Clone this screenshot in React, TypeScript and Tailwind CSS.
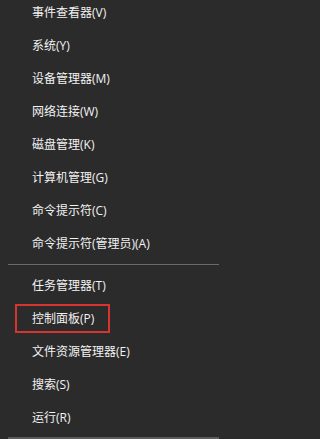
const topItems = [
  "事件查看器(V)",
  "系统(Y)",
  "设备管理器(M)",
  "网络连接(W)",
  "磁盘管理(K)",
  "计算机管理(G)",
  "命令提示符(C)",
  "命令提示符(管理员)(A)",
]

const bottomItems = [
  { label: "任务管理器(T)" },
  { label: "控制面板(P)", highlighted: true },
  { label: "文件资源管理器(E)" },
  { label: "搜索(S)" },
  { label: "运行(R)" },
]

function MenuItem({ label, highlighted }: { label: string; highlighted?: boolean }) {
  if (highlighted) {
    return (
      <div className="h-[33px] flex items-center pl-[15px]">
        <span className="h-[29px] w-[95px] flex items-center pl-[15px] border-2 border-[#d6352f]">{label}</span>
      </div>
    )
  }
  return <div className="h-[33px] flex items-center pl-[32px]">{label}</div>
}

export default function App() {
  return (
    <div className="w-full h-screen overflow-hidden bg-[#2b2b2b]">
      <div
        className="w-[227px] text-[#f2f2f2] text-[12px] leading-none"
        style={{ fontFamily: '"Open Sans", "Noto Sans CJK SC", sans-serif' }}
      >
        <div className="-mt-[4px]">
          {topItems.map((label) => (
            <MenuItem key={label} label={label} />
          ))}
          <div className="mx-[8px] my-[4px] h-px bg-[#6a6a6a]" />
          {bottomItems.map((item) => (
            <MenuItem key={item.label} label={item.label} highlighted={item.highlighted} />
          ))}
          <div className="mx-[8px] mt-[3px] h-[3px] bg-[#5c5c5c]" />
        </div>
      </div>
    </div>
  )
}
